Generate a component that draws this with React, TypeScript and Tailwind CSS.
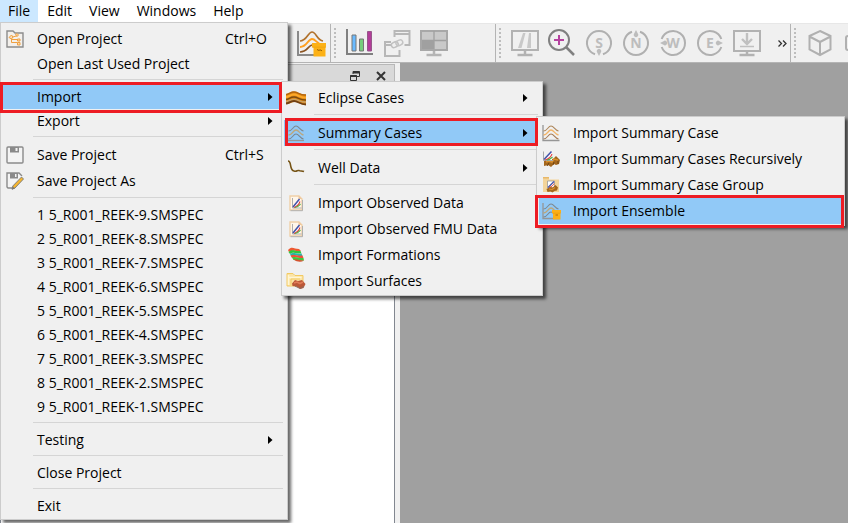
import type { ReactNode } from "react";

type IconProps = { children: ReactNode; size?: number; className?: string };

function Icon({ children, size = 18, className = "" }: IconProps) {
  return (
    <svg width={size} height={size} viewBox={`0 0 ${size} ${size}`} fill="none" className={`shrink-0 ${className}`} aria-hidden="true">
      {children}
    </svg>
  );
}

/* ---------- menu icons ---------- */

const openProjectIcon = (
  <Icon>
    <path d="M1 17V1h6l2 2h8v14z" fill="#f3f0ec" stroke="#8c8c8c" strokeWidth="1.4" />
    <path d="M5 7.5l7-2M5.500 8v4.500h6M6 9.500h6" stroke="#f0a040" />
    <path d="M3 7.500l2.500-2.500 1.500 2-1.500 2zM9.500 4.500l1.500-1 1.500 1.500-1.500 1.500zM11.500 9h2.500v2h-2.500zM11.500 12.500h2.500V15h-2.500z" fill="#f9dcb6" stroke="#f0a040" />
  </Icon>
);

const saveIcon = (
  <Icon>
    <rect x="1" y="1" width="16" height="16" rx="1" fill="#f4f4f4" stroke="#8a8a8a" strokeWidth="1.4" />
    <path d="M4 1h9v5.500H4z" fill="#8a8a8a" />
    <path d="M9.500 2h2v3h-2z" fill="#f4f4f4" />
  </Icon>
);

const saveAsIcon = (
  <Icon>
    <path d="M6 16H2l-1-1V1h12l3 3" fill="#f4f4f4" stroke="#8a8a8a" strokeWidth="1.4" />
    <path d="M4 1h8v5.500H4z" fill="#8a8a8a" />
    <path d="M9 2h1.500v3H9z" fill="#f4f4f4" />
    <path d="M15.500 5l2 2-8.500 9-3 1.200.800-3.200z" fill="#f5b52e" stroke="#777" strokeWidth=".9" />
    <path d="M6.800 14.500L9 16.500l-3 1z" fill="#777" />
  </Icon>
);

const eclipseIcon = (
  <Icon size={20}>
    <path d="M0 6c3 0 4-2.500 8-2.500S14 7 20 6.500V17c-5 .500-7-3-11-3s-5 2.500-9 2z" fill="#df8a16" />
    <path d="M0 6.500C3 6.500 4 4 8 4s6 3.500 12 3" stroke="#b5650c" strokeWidth="1.500" />
    <path d="M0 9c3 0 4-2.500 8-2.500S14 10 20 9.500" stroke="#ffa928" strokeWidth="1.800" />
    <path d="M0 11.500C3 11.500 4 9 8 9s6 3.500 12 3" stroke="#7c4a10" strokeWidth="1.500" />
    <path d="M0 13.500c3 0 4-2 8-2s6 3 12 2.500" stroke="#c8a066" strokeWidth="1.500" />
    <path d="M0 15.500c3 0 4-2.500 8-2.500s6 3.500 12 3.500" stroke="#704015" strokeWidth="1.800" />
  </Icon>
);

function SummaryIcon({ box = false, blue = false, axis = true }: { box?: boolean; blue?: boolean; axis?: boolean }) {
  return (
    <Icon size={20}>
      <path d={axis ? "M2 2v15.500h16.500" : "M2 17.500h16"} stroke="#969696" strokeWidth="1.300" />
      <path d="M2.500 8c4 0 4.500-5 7.500-5s3.500 4 7.500 5" stroke={blue ? "#7f8990" : "#ae875c"} strokeWidth="1.100" />
      <path d="M2.500 12c4 0 4.500-5 7.500-5s3.500 4 7.500 5" stroke={blue ? "#bda67b" : "#f2b467"} strokeWidth="1.300" />
      <path d="M2.500 16c4 0 4.500-5 7.500-5s3.500 4 7.500 5" stroke={blue ? "#7d868c" : "#a77c55"} strokeWidth="1.100" />
      {box && (
        <>
          <path d="M11 9h9v3h-9zM12 12h7.500v6.500H12z" fill="#fbb018" />
          <path d="M11.500 12.200h8" stroke="#eea008" strokeWidth=".8" />
          <path d="M14.500 14h2.500" stroke="#b86d00" />
        </>
      )}
    </Icon>
  );
}

const wellIcon = (
  <Icon size={18}>
    <path d="M1 2c4 0 1 9 6 10 3 1 3-1 5-.500 1 1 3 0 5 1" stroke="#755315" strokeWidth="1.600" />
  </Icon>
);

const observedIcon = (
  <Icon size={18}>
    <path d="M3 2h9l3 3v11H3z" fill="#fff6ea" stroke="#f0d0a8" strokeWidth="1.400" />
    <path d="M3.500 16.700h12V6" stroke="#b0b0b0" />
    <path d="M11.500 1.500L15 5h-3.500z" fill="#efc89d" />
    <path d="M5 13.500L13 5v8.500z" fill="#fff" />
    <path d="M5.500 4v10h9" stroke="#9a9a9a" strokeWidth=".8" />
    <path d="M6 13l6.500-8" stroke="#4252a8" strokeWidth="1.500" />
    <path d="M7 13.500c3-1 5-3 6-6" stroke="#e73737" strokeWidth="1.100" />
    <path d="M8 13.500c3-.3 4-2 5.500-3.500" stroke="#55b54a" strokeWidth="1.200" />
  </Icon>
);

const formationsIcon = (
  <Icon size={18}>
    <path d="M1 4c4-4.500 6-1 11-1l2 2C9 6 7 3 2 6z" fill="#ed5931" />
    <path d="M1.500 6c4-3.500 6-.500 12-1l1 2.500C9 8 7 5 3 8z" fill="#31c640" />
    <path d="M3 8c4-2.500 6 .500 11.500-.500l1 2.500C10 11 8 7.500 4 10z" fill="#28b6a7" />
    <path d="M3.500 9.500c4-2 6 .800 12 0l1 2.500c-5 1-7-2-11.500 0z" fill="#ef5039" />
    <path d="M5 11.500c4-1.500 6 1 11.500.500l.500 2.500c-4 1-8-1-10.500-.500z" fill="#42c63d" />
    <path d="M6.500 13.500c4-1 7 1.500 10.500 1-3 2-7 1.500-10.500-1z" fill="#d5522f" />
  </Icon>
);

const surfacesIcon = (
  <Icon size={20}>
    <path d="M1 2.500h6l2 2h8V15H1z" fill="#fbe4a6" stroke="#f3ca62" />
    <path d="M2.500 4v10M2.500 6.500h13" stroke="#fff5d4" strokeWidth="1.500" />
    <path d="M5 14V8h9" stroke="#f3ca62" />
    <path d="M6 12.500l3-3.500 3 1 4-1 3.500 4-2 4-3 1-4-2.500-4-.500z" fill="#bb5838" />
    <path d="M8 12l3-1 3 1.500 3-1.500" stroke="#e07c58" strokeWidth="1.600" />
    <path d="M9 15l5 2.500 4-2" stroke="#8a6a5e" />
  </Icon>
);

const recursiveIcon = (
  <Icon size={18}>
    <path d="M2 11l5-3 4 1 3-3 4 4-1 4-3 1-2-1-3 3-3-2-4 1z" fill="#a4661c" />
    <path d="M4 12l3-1 3 1 2-3 4 1" stroke="#d8902e" strokeWidth="1.500" />
    <path d="M5 16l2-3M11 15l1-3M16 14v-3" stroke="#6f4210" />
    <path d="M1.500 10V9L10 1v9z" fill="#fff" />
    <path d="M1.500 1.500v9H11" stroke="#a8a8a8" />
    <path d="M2 9.500L9.500 1.500" stroke="#4252a8" strokeWidth="1.500" />
    <path d="M3 10c4-1 6-3 7-6" stroke="#e94343" strokeWidth="1.100" />
    <path d="M5 10c3-.5 4-1.500 5.500-3" stroke="#4cb34e" strokeWidth="1.200" />
  </Icon>
);

const groupIcon = (
  <Icon size={18}>
    <path d="M1 1h6v2.500h10V16H1z" fill="#f3d49a" />
    <path d="M1 1h6v1.500H1z" fill="#e8b869" />
    <path d="M5.500 5h7v7h-7z" fill="#fff" stroke="#999" strokeWidth=".8" />
    <path d="M6 11.500l6-6" stroke="#4252a8" strokeWidth="1.300" />
    <path d="M7 11.500c3-1 4-2 5-4" stroke="#e34a35" />
    <path d="M4.500 13l4-2 2 .500 3-2.500 2.500 2.500-1 3-2.500.500-2 1.500-2-1-3 .500z" fill="#a4661c" />
    <path d="M7 13l3 .500 3-2" stroke="#d8902e" strokeWidth="1.200" />
  </Icon>
);

/* ---------- menu parts ---------- */

const ROW = "flex w-full items-center text-left whitespace-nowrap";

type RowProps = {
  label: string;
  icon?: ReactNode;
  shortcut?: string;
  arrow?: boolean;
  active?: boolean;
  tall?: boolean;
};

function Row({ label, icon, shortcut, arrow, active, tall }: RowProps) {
  return (
    <button
      type="button"
      role="menuitem"
      aria-haspopup={arrow ? "menu" : undefined}
      aria-expanded={arrow ? !!active : undefined}
      className={`${ROW} ${tall ? "h-[26px]" : "h-6"} ${active ? "bg-[#91c9f7]" : ""}`}
    >
      <span className="flex w-6 justify-center">{icon}</span>
      <span className="flex-1 pl-2.5">{label}</span>
      {shortcut && <span className="w-[60px]">{shortcut}</span>}
      {arrow && (
        <svg width="5" height="8" viewBox="0 0 5 8" className="mr-3" aria-hidden="true">
          <path d="M0 0l4.500 4L0 8z" fill="#000" />
        </svg>
      )}
    </button>
  );
}

function Rule() {
  return (
    <div role="separator" className="h-[9px] pt-[3px] pr-0.5 pl-[30px]">
      <div className="h-px bg-[#d5d5d5]" />
    </div>
  );
}

function Menu({ label, className, children }: { label: string; className: string; children: ReactNode }) {
  return (
    <div
      role="menu"
      aria-label={label}
      className={`absolute border border-[#cccccc] bg-[#f0f0f0] px-0.5 pt-[3px] pb-px shadow-[3px_3px_3px_rgba(0,0,0,0.6)] ${className}`}
    >
      {children}
    </div>
  );
}

/* ---------- toolbar ---------- */

function Tool({ label, children }: { label: string; children: ReactNode }) {
  return (
    <button type="button" aria-label={label} className="flex h-full w-[37px] shrink-0 items-center justify-center">
      <Icon size={30}>{children}</Icon>
    </button>
  );
}

function Handle() {
  return (
    <svg width="3" height="32" viewBox="0 0 3 32" className="mr-1 ml-[3px] shrink-0" aria-hidden="true">
      <path d="M1 1v31" stroke="#bdbdbd" strokeWidth="2" strokeDasharray="2 2" />
    </svg>
  );
}

function Compass({ letter, turn }: { letter: string; turn: number }) {
  return (
    <>
      <g transform={`rotate(${turn} 15 15)`}>
        <path d="M19 3.700A12 12 0 1 1 11 3.700" stroke="#b0b0b0" strokeWidth="2" />
        <path d="M15 2l1.800 3.500a2.300 2.300 0 1 1-3.600 0z" fill="#bdbdbd" />
      </g>
      <text x="15" y="20" textAnchor="middle" fontSize="14" fontWeight="700" fill="#bdbdbd">
        {letter}
      </text>
    </>
  );
}

function Toolbar() {
  return (
    <div role="toolbar" aria-label="Main tools" className="flex h-10 shrink-0 overflow-hidden border-t border-b border-t-[#e7e7e7] border-b-[#b4b4b4] bg-[#f0f0f0]">
      <div className="flex w-[331px] shrink-0 items-center justify-end border-r border-[#b4b4b4] pr-px">
        <Tool label="Import ensemble">
          <path d="M2 3v24h22" stroke="#8a8a8a" strokeWidth="2" />
          <path d="M4 13C11 13 12 4 16 4s5 8 11 9" stroke="#b0712c" strokeWidth="1.700" />
          <path d="M4 19c7 0 8-8 12-8s4 5 11 6" stroke="#ff9f20" strokeWidth="1.800" />
          <path d="M4 24c7 0 8-6 12-7" stroke="#8c5422" strokeWidth="1.700" />
          <path d="M16 15h14v4.500H16zM17.500 19h12v9.500h-12z" fill="#fcb116" />
          <path d="M16.500 19.200h13" stroke="#eda30e" strokeWidth=".8" />
          <path d="M21 21.500l2 1 1-.700 2 1" stroke="#9a6000" />
        </Tool>
      </div>
      <div className="flex w-[165px] shrink-0 items-center border-r border-[#b4b4b4]">
        <Handle />
        <Tool label="Bar chart">
          <path d="M2 1v26M2 26h26" stroke="#808080" strokeWidth="2" />
          <path d="M7 7h4v16H7z" fill="#69baff" stroke="#777" />
          <path d="M14.500 11h4v12h-4z" fill="#74cf7b" stroke="#777" />
          <path d="M22.500 3.500h4V23h-4z" fill="#b23d98" stroke="#97578b" />
        </Tool>
        <Tool label="Link views">
          <path d="M12.500 9V3h15v14h-5M12.500 6h15" stroke="#b7b7b7" strokeWidth="2" />
          <path d="M9 14H3v14h14.500v-6M3 17h6" stroke="#b7b7b7" strokeWidth="2" />
          <rect x="9" y="14" width="7" height="5" rx="2.500" stroke="#c0c0c0" strokeWidth="1.500" transform="rotate(-25 13 16)" />
          <rect x="14" y="12" width="7" height="5" rx="2.500" stroke="#c4c4c4" strokeWidth="1.500" transform="rotate(-25 18 15)" />
        </Tool>
        <Tool label="Tile windows">
          <path d="M2 3h26v19H2z" fill="#c9c9c9" stroke="#a8a8a8" strokeWidth="2" />
          <path d="M3 13h12v8H3z" fill="#a0a0a0" />
          <path d="M15 3v18M3 12.500h24" stroke="#a0a0a0" strokeWidth="1.300" />
          <path d="M15 23v3M7.500 27h15" stroke="#b5b5b5" strokeWidth="2.500" />
        </Tool>
      </div>
      <div className="flex w-[295px] shrink-0 items-center border-r border-[#b4b4b4]">
        <Handle />
        <Tool label="Display">
          <path d="M2 3h26v19H2z" stroke="#b2b2b2" strokeWidth="2" />
          <path d="M8 20l5-15h2.500l-4 15zM17 20l2-15h2v15z" fill="#c8c8c8" />
          <path d="M15 23v3M7.500 27h15" stroke="#b2b2b2" strokeWidth="2.500" />
        </Tool>
        <Tool label="Zoom in">
          <circle cx="12" cy="12" r="10" stroke="#808080" strokeWidth="2" />
          <path d="M19 19l8 8" stroke="#808080" strokeWidth="2.500" />
          <path d="M12 7v10M7 12h10" stroke="#b5429f" strokeWidth="2" />
        </Tool>
        <Tool label="View from south"><Compass letter="S" turn={180} /></Tool>
        <Tool label="View from north"><Compass letter="N" turn={0} /></Tool>
        <Tool label="View from west"><Compass letter="W" turn={270} /></Tool>
        <Tool label="View from east"><Compass letter="E" turn={90} /></Tool>
        <Tool label="View from above">
          <path d="M2 3h26v20H2z" stroke="#b2b2b2" strokeWidth="2" />
          <path d="M15 5v10M10 11l5 5 5-5" stroke="#c0c0c0" strokeWidth="2.400" />
          <path d="M8 18.500h14" stroke="#c0c0c0" strokeWidth="1.500" />
          <path d="M15 23v3M7.500 27h15" stroke="#b2b2b2" strokeWidth="2.500" />
        </Tool>
        <button type="button" aria-label="More tools" className="flex flex-1 items-center justify-end pr-[3px]">
          <svg width="9" height="7" viewBox="0 0 9 7" fill="none" aria-hidden="true">
            <path d="M.500.500l3 3-3 3M5 .500l3 3-3 3" stroke="#333" strokeWidth="1.300" />
          </svg>
        </button>
      </div>
      <div className="flex flex-1 items-center overflow-hidden">
        <Handle />
        <Tool label="3D view">
          <path d="M15 3l10.500 5v13.500L15 27 4.500 21.500V8zM4.500 8.500L15 14l10.500-5.500M15 14v13" stroke="#b0b0b0" strokeWidth="2" />
        </Tool>
        <Tool label="Surface view">
          <rect x="4" y="8" width="20" height="14" rx="2" stroke="#b0b0b0" strokeWidth="2" />
        </Tool>
      </div>
    </div>
  );
}

const menuTitles = ["File", "Edit", "View", "Windows", "Help"];
const recentFiles = [9, 8, 7, 6, 5, 4, 3, 2, 1];

export default function App() {
  return (
    <div className="relative flex h-screen flex-col overflow-hidden bg-white font-['Open_Sans','Noto_Sans',sans-serif] text-sm text-black">
      <div role="menubar" className="flex h-[23px] shrink-0 gap-px bg-white">
        {menuTitles.map((title) => (
          <button
            key={title}
            type="button"
            role="menuitem"
            className={`h-[22px] px-2 ${title === "File" ? "bg-[#cce8ff]" : ""}`}
          >
            {title}
          </button>
        ))}
      </div>
      <Toolbar />
      <div className="flex min-h-0 flex-1">
        <aside className="flex w-[400px] shrink-0 flex-col bg-[#f0f0f0] pt-px pr-[5px]">
          <div className="flex h-6 shrink-0 items-center justify-end gap-4 border border-[#b8b8b8] bg-[#d9d9d9] pr-2">
            <button type="button" aria-label="Float panel">
              <Icon size={10}>
                <path d="M3 3V.500h6.500v5H7" stroke="#333" />
                <path d="M3 1.500h6.500M.500 5h6" stroke="#333" strokeWidth="2" />
                <path d="M.500 4.500h6v5h-6z" stroke="#333" />
              </Icon>
            </button>
            <button type="button" aria-label="Close panel">
              <Icon size={10}>
                <path d="M1 1l8 8M9 1L1 9" stroke="#333" strokeWidth="2" />
              </Icon>
            </button>
          </div>
          <div className="flex-1 border border-b-0 border-[#828790] bg-white" />
        </aside>
        <main className="flex-1 bg-[#a0a0a0]" />
      </div>

      <Menu label="File" className="top-[22px] left-0 w-72">
        <Row tall label="Open Project" icon={openProjectIcon} shortcut="Ctrl+O" />
        <Row label="Open Last Used Project" />
        <Rule />
        <Row label="Import" arrow active />
        <Row label="Export" arrow />
        <Rule />
        <Row tall label="Save Project" icon={saveIcon} shortcut="Ctrl+S" />
        <Row tall label="Save Project As" icon={saveAsIcon} />
        <Rule />
        {recentFiles.map((n, i) => (
          <Row key={n} label={`${i + 1} 5_R001_REEK-${n}.SMSPEC`} />
        ))}
        <Rule />
        <Row label="Testing" arrow />
        <Rule />
        <Row label="Close Project" />
        <Rule />
        <Row label="Exit" />
      </Menu>

      <Menu label="Import" className="top-[81px] left-[281px] w-[262px]">
        <Row tall label="Eclipse Cases" icon={eclipseIcon} arrow />
        <Rule />
        <Row tall label="Summary Cases" icon={<SummaryIcon blue axis={false} />} arrow active />
        <Rule />
        <Row tall label="Well Data" icon={wellIcon} arrow />
        <Rule />
        <Row tall label="Import Observed Data" icon={observedIcon} />
        <Row tall label="Import Observed FMU Data" icon={observedIcon} />
        <Row tall label="Import Formations" icon={formationsIcon} />
        <Row tall label="Import Surfaces" icon={surfacesIcon} />
      </Menu>

      <Menu label="Summary Cases" className="top-[116px] left-[536px] w-[309px]">
        <Row tall label="Import Summary Case" icon={<SummaryIcon />} />
        <Row tall label="Import Summary Cases Recursively" icon={recursiveIcon} />
        <Row tall label="Import Summary Case Group" icon={groupIcon} />
        <Row tall label="Import Ensemble" icon={<SummaryIcon box blue />} active />
      </Menu>

      {/* Highlight frames around the path through the menus */}
      <div className="pointer-events-none absolute top-[82px] left-0 h-[31px] w-[282px] border-3 border-[#ed1c24]" />
      <div className="pointer-events-none absolute top-[118px] left-[285px] h-7 w-[253px] border-3 border-[#ed1c24]" />
      <div className="pointer-events-none absolute top-[195px] left-[535px] h-[33px] w-[309px] border-3 border-[#ed1c24]" />
    </div>
  );
}
